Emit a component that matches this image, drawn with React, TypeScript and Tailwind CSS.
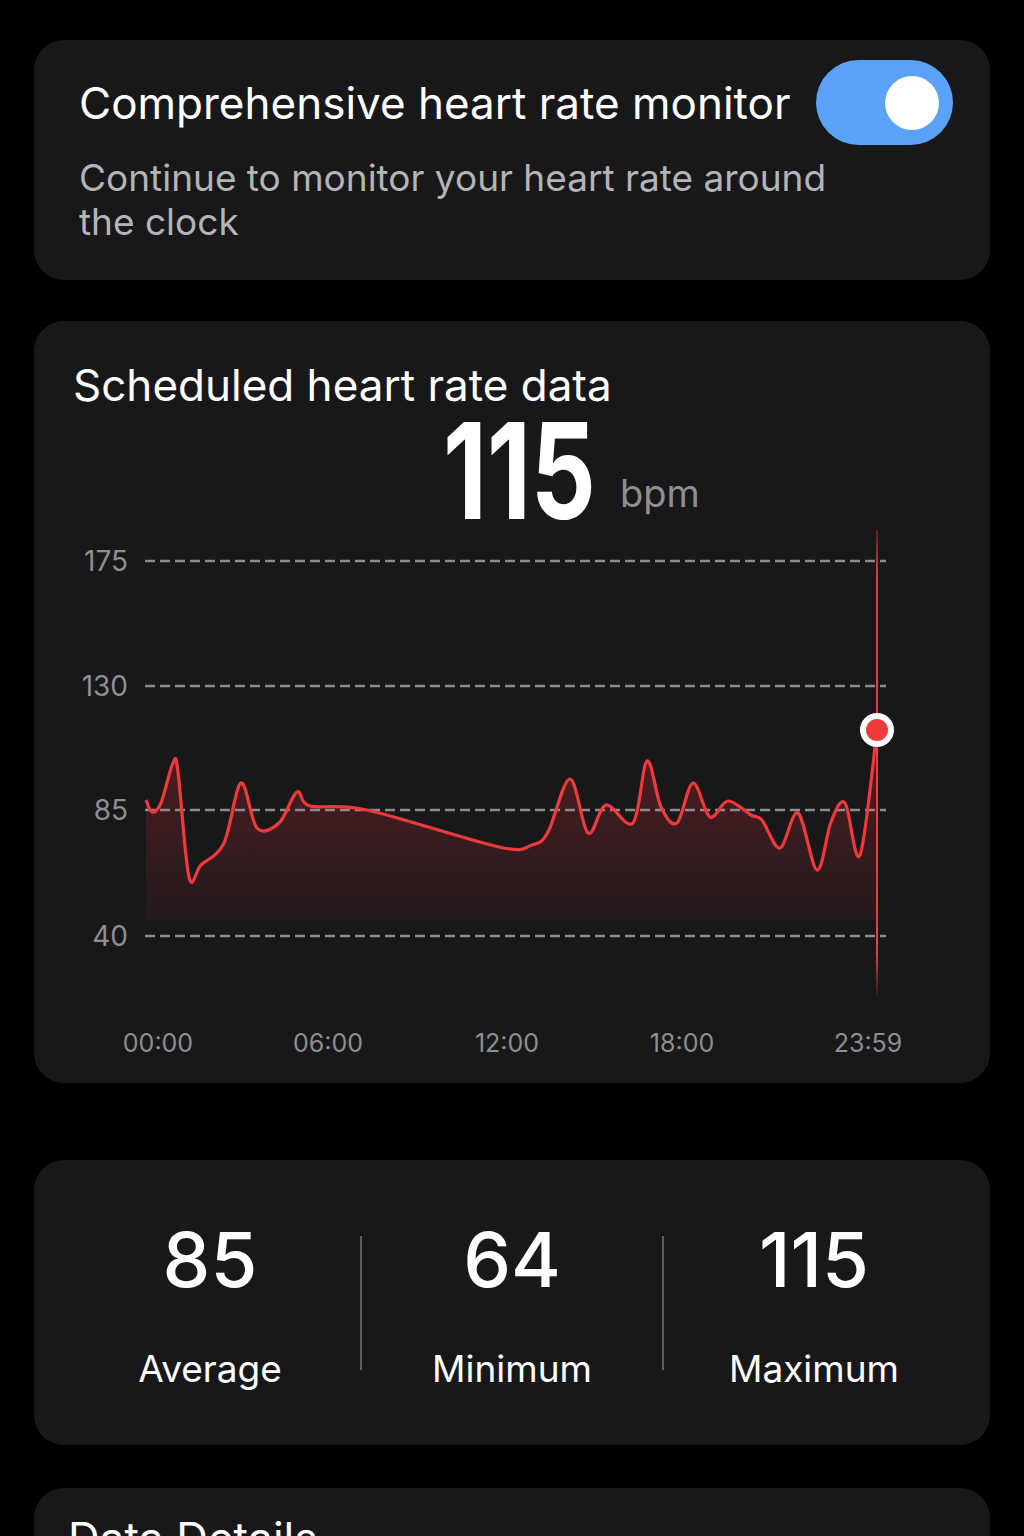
import React from 'react';

type Pt = [number, number];

// curve points in page pixels (chart svg uses the same coordinates via viewBox)
const points: Pt[] = [
  [146, 800], [152, 812], [161, 803], [173, 763], [178, 772], [189, 877],
  [201, 865], [224, 843], [241, 783], [257, 828], [279, 823], [297, 792],
  [310, 806], [367, 810], [499, 847], [532, 845], [548, 832], [570, 779],
  [588, 833], [606, 805], [633, 823], [647, 761], [661, 807], [677, 823],
  [693, 783], [710, 817], [728, 801], [751, 815], [762, 820], [780, 848],
  [798, 813], [817, 870], [831, 822], [845, 803], [860, 855], [877, 730],
];

const smoothPath = (pts: Pt[]) => {
  let d = `M ${pts[0][0]} ${pts[0][1]}`;
  for (let i = 0; i < pts.length - 1; i++) {
    const p0 = pts[i - 1] || pts[i];
    const p1 = pts[i];
    const p2 = pts[i + 1];
    const p3 = pts[i + 2] || p2;
    const c1x = p1[0] + (p2[0] - p0[0]) / 6;
    const c1y = p1[1] + (p2[1] - p0[1]) / 6;
    const c2x = p2[0] - (p3[0] - p1[0]) / 6;
    const c2y = p2[1] - (p3[1] - p1[1]) / 6;
    d += ` C ${c1x} ${c1y} ${c2x} ${c2y} ${p2[0]} ${p2[1]}`;
  }
  return d;
};

const linePath = smoothPath(points);
const areaPath = `${linePath} L 877 920 L 146 920 Z`;

const grid = [
  { label: '175', y: 561 },
  { label: '130', y: 686 },
  { label: '85', y: 810 },
  { label: '40', y: 936 },
];

const times = [
  { label: '00:00', x: 158 },
  { label: '06:00', x: 328 },
  { label: '12:00', x: 507 },
  { label: '18:00', x: 682 },
  { label: '23:59', x: 868 },
];

const HeartChart = () => (
  <svg className="block w-[956px] h-[553px]" viewBox="34 530 956 553">
    <defs>
      <linearGradient id="area" x1="0" y1="760" x2="0" y2="920" gradientUnits="userSpaceOnUse">
        <stop offset="0" stopColor="#4e1c21" />
        <stop offset="1" stopColor="#221a1c" />
      </linearGradient>
      <linearGradient id="cursor" x1="0" y1="530" x2="0" y2="1000" gradientUnits="userSpaceOnUse">
        <stop offset="0" stopColor="#ef3b3d" stopOpacity="0.3" />
        <stop offset="0.1" stopColor="#ef3b3d" />
        <stop offset="0.9" stopColor="#ef3b3d" />
        <stop offset="1" stopColor="#ef3b3d" stopOpacity="0" />
      </linearGradient>
    </defs>
    <path d={areaPath} fill="url(#area)" />
    {grid.map((g) => (
      <g key={g.label}>
        <line x1="145" x2="886" y1={g.y} y2={g.y} stroke="#8c8c8e" strokeWidth="2.5" strokeDasharray="10 5" />
        <text x="128" y={g.y} textAnchor="end" dominantBaseline="central" fill="#8e8e90" fontSize="28" fontFamily="Inter, sans-serif">
          {g.label}
        </text>
      </g>
    ))}
    <path d={linePath} fill="none" stroke="#f0393b" strokeWidth="3.2" strokeLinejoin="round" />
    <line x1="877" x2="877" y1="530" y2="1000" stroke="url(#cursor)" strokeWidth="2" />
    <circle cx="877" cy="730" r="17" fill="#ffffff" />
    <circle cx="877" cy="730" r="11" fill="#f0393b" />
    {times.map((t) => (
      <text key={t.label} x={t.x} y="1043" textAnchor="middle" dominantBaseline="central" fill="#8e8e90" fontSize="25" fontFamily="Inter, sans-serif">
        {t.label}
      </text>
    ))}
  </svg>
);

const Stat = ({ value, label }: { value: string; label: string }) => (
  <div className="w-[300px] flex flex-col items-center">
    <div className="text-[76px] leading-[72px] font-medium text-white">{value}</div>
    <div className="mt-[52px] text-[37px] leading-[44px] text-white">{label}</div>
  </div>
);

export default function App() {
  return (
    <div className="min-h-[1536px] bg-black px-[34px] pt-[40px] font-['Inter',sans-serif] overflow-hidden">
      <div className="rounded-[30px] bg-[#18181a] pl-[45px] pr-[37px] pt-[20px] pb-[36px]">
        <div className="flex items-center justify-between">
          <div className="text-[44px] leading-[50px] text-white">Comprehensive heart rate monitor</div>
          <div className="w-[137px] h-[85px] rounded-full bg-[#5aa2f8] flex items-center justify-end pr-[14px]">
            <div className="w-[54px] h-[54px] rounded-full bg-white" />
          </div>
        </div>
        <p className="mt-[11px] w-[790px] text-[37px] leading-[44px] text-[#b4b4b6]">
          Continue to monitor your heart rate around the clock
        </p>
      </div>

      <div className="mt-[41px] rounded-[30px] bg-[#18181a] pt-[39px]">
        <div className="pl-[39px] text-[44px] leading-[50px] text-white">Scheduled heart rate data</div>
        <div className="mt-[10px] ml-[409px] flex items-end h-[100px]">
          <span className="inline-block w-[150px] origin-left scale-x-[0.76] whitespace-nowrap text-[134px] leading-[100px] font-bold text-white">
            115
          </span>
          <span className="ml-[27px] mb-[5px] text-[38px] leading-[44px] text-[#8e8e90]">bpm</span>
        </div>
        <div className="mt-[10px]">
          <HeartChart />
        </div>
      </div>

      <div className="mt-[77px] rounded-[30px] bg-[#18181a] px-[26px] pt-[63px] pb-[54px] flex items-start">
        <Stat value="85" label="Average" />
        <div className="mt-[13px] w-[2px] h-[134px] bg-[#5c5c5e]" />
        <Stat value="64" label="Minimum" />
        <div className="mt-[13px] w-[2px] h-[134px] bg-[#5c5c5e]" />
        <Stat value="115" label="Maximum" />
      </div>

      <div className="mt-[43px] h-[200px] rounded-[30px] bg-[#18181a] pl-[34px] pt-[25px]">
        <div className="text-[44px] leading-[50px] text-white">Data Details</div>
      </div>
    </div>
  );
}
